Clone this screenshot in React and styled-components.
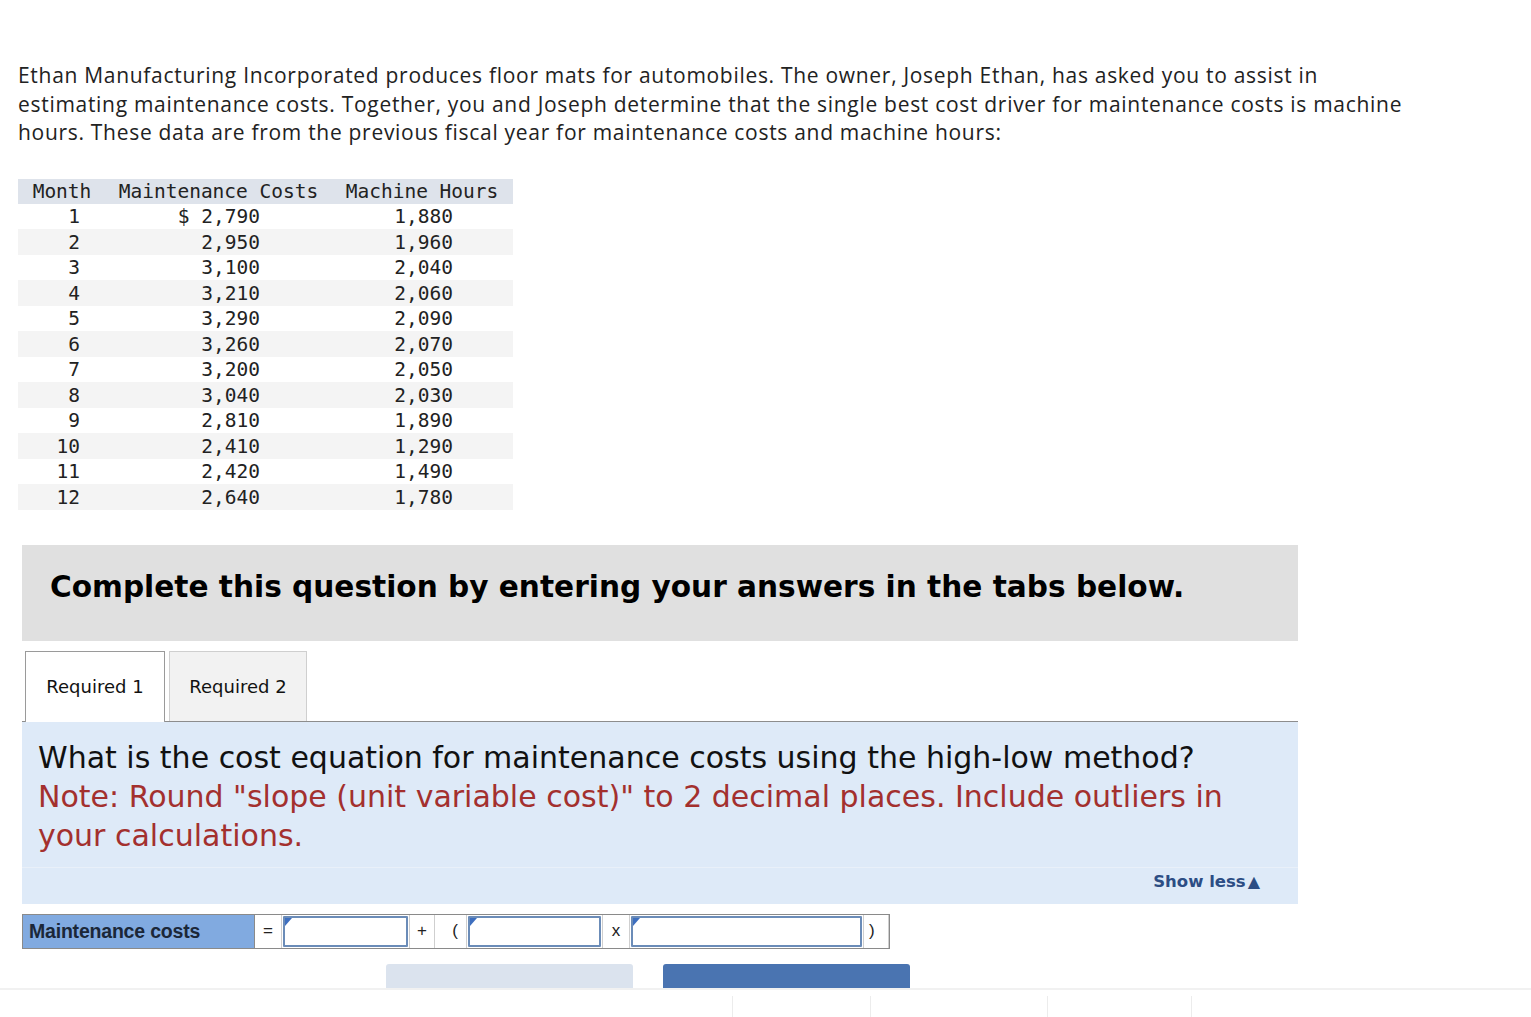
import styled, { createGlobalStyle } from 'styled-components'

const GlobalStyle = createGlobalStyle`
  html, body { margin: 0; padding: 0; background: #fff; }
  body { font-family: "Liberation Sans", Arial, sans-serif; color: #1a1a1a; }
`

const Page = styled.div`
  padding: 61px 0 0 18px;
  min-height: 1017px;
  box-sizing: border-box;
`

const Intro = styled.p`
  margin: 0;
  white-space: nowrap;
  font-family: "Open Sans", "Lato", sans-serif;
  font-size: 21px;
  letter-spacing: 0.7px;
  line-height: 28.6px;
  color: #222;
`

const DataTable = styled.table`
  margin-top: 32px;
  border-collapse: collapse;
  width: 495px;
  font-family: "DejaVu Sans Mono", monospace;
  font-size: 19.5px;
  color: #222;
`

const HeadCell = styled.th`
  background: #dee3eb;
  font-weight: normal;
  height: 25px;
  padding: 0;
  text-align: center;
  white-space: nowrap;
`

const Row = styled.tr`
  background: ${p => (p.$alt ? '#f4f4f4' : '#fff')};
`

const Cell = styled.td`
  height: 25.5px;
  padding: 0 ${p => p.$pad || 0}px 0 0;
  text-align: right;
  white-space: nowrap;
`

const Question = styled.section`
  margin: 35px 0 0 4px;
  width: 1276px;
`

const Banner = styled.div`
  background: #e0e0e0;
  height: 96px;
  box-sizing: border-box;
  padding: 0 0 12px 28px;
  display: flex;
  align-items: center;
  font-family: "DejaVu Sans", Verdana, sans-serif;
  font-weight: bold;
  font-size: 29.6px;
  color: #000;
`

const TabBar = styled.div`
  margin-top: 10px;
  display: flex;
  gap: 4px;
  padding-left: 3px;
  border-bottom: 1px solid #8d8d8d;
`

const Tab = styled.div`
  width: ${p => p.$w}px;
  box-sizing: border-box;
  display: flex;
  align-items: center;
  justify-content: center;
  font-family: "DejaVu Sans", Verdana, sans-serif;
  font-size: 18px;
  color: #111;
  background: ${p => (p.$active ? '#fff' : '#f2f2f2')};
  border: 1px solid ${p => (p.$active ? '#9a9a9a' : '#cfcfcf')};
  border-bottom: none;
  margin-bottom: ${p => (p.$active ? '-1px' : '0')};
  height: ${p => (p.$active ? 71 : 70)}px;
`

const Panel = styled.div`
  background: #deeaf8;
`

const Prompt = styled.div`
  padding: 16px 16px 12px 16px;
  font-family: "DejaVu Sans", Verdana, sans-serif;
  font-size: 30px;
  line-height: 39px;
  color: #111;
  border-bottom: 1px solid #e9f0f9;
`

const Note = styled.span`
  display: block;
  color: #a3302e;
`

const ShowLessRow = styled.div`
  height: 36px;
  box-sizing: border-box;
  padding: 0 38px 9px 0;
  display: flex;
  align-items: center;
  justify-content: flex-end;
  font-family: "DejaVu Sans", Verdana, sans-serif;
  font-weight: bold;
  font-size: 16.5px;
  color: #2c4d84;
`

const Triangle = styled.span`
  font-size: 16px;
  margin-left: 2px;
`

const Equation = styled.div`
  margin-top: 10px;
  display: flex;
  height: 33px;
  width: fit-content;
  border: 1px solid #8a8a8a;
`

const Label = styled.div`
  width: 232px;
  box-sizing: border-box;
  background: #81aae0;
  display: flex;
  align-items: center;
  padding-left: 6px;
  font-weight: bold;
  font-size: 19.5px;
  letter-spacing: -0.2px;
  color: #1b2738;
  border-right: 1px solid #8a8a8a;
`

const Sign = styled.div`
  width: ${p => p.$w}px;
  display: flex;
  align-items: center;
  justify-content: ${p => p.$justify || 'center'};
  font-size: 17px;
  color: #222;
  background: #fff;
  border-right: 1px solid #cfcfcf;
  padding: 0 ${p => p.$pr || 0}px 0 ${p => p.$pl || 0}px;
  box-sizing: border-box;
`

const InputWrap = styled.div`
  position: relative;
  width: ${p => p.$w}px;
  box-sizing: border-box;
  padding: 1px;
  background: #fff;
  border-right: 1px solid #cfcfcf;
`

const Field = styled.input`
  width: 100%;
  height: 100%;
  box-sizing: border-box;
  border: 2px solid #6b8cb8;
  border-radius: 1px;
  outline: none;
  background: #fff;
  font-size: 16px;
`

const Flag = styled.span`
  position: absolute;
  left: 3px;
  top: 3px;
  width: 0;
  height: 0;
  border-bottom: 8px solid transparent;
  border-left: 7px solid #3e6fbf;
`

const Nav = styled.div`
  margin: 15px 0 0 364px;
  display: flex;
  gap: 30px;
`

const NavButton = styled.div`
  width: 247px;
  height: 44px;
  border-radius: 3px 3px 0 0;
  background: ${p => (p.$primary ? '#4a74b1' : '#dbe3ee')};
`

const Footer = styled.footer`
  position: fixed;
  left: 0;
  right: 0;
  bottom: 0;
  height: 27px;
  background: #fff;
  border-top: 2px solid #f1f1f1;
  display: flex;
  padding-left: 732px;
`

const FooterCell = styled.div`
  width: ${p => p.$w}px;
  border-left: 1px solid #ececec;
  margin-top: 6px;
`

const rows = [
  [1, '$ 2,790', '1,880'],
  [2, '2,950', '1,960'],
  [3, '3,100', '2,040'],
  [4, '3,210', '2,060'],
  [5, '3,290', '2,090'],
  [6, '3,260', '2,070'],
  [7, '3,200', '2,050'],
  [8, '3,040', '2,030'],
  [9, '2,810', '1,890'],
  [10, '2,410', '1,290'],
  [11, '2,420', '1,490'],
  [12, '2,640', '1,780'],
]

function Input({ w }) {
  return (
    <InputWrap $w={w}>
      <Flag />
      <Field />
    </InputWrap>
  )
}

export default function App() {
  return (
    <>
      <GlobalStyle />
      <Page>
        <Intro>
          Ethan Manufacturing Incorporated produces floor mats for automobiles. The owner, Joseph Ethan, has asked you to assist in<br />
          estimating maintenance costs. Together, you and Joseph determine that the single best cost driver for maintenance costs is machine<br />
          hours. These data are from the previous fiscal year for maintenance costs and machine hours:
        </Intro>

        <DataTable>
          <colgroup>
            <col style={{ width: 88 }} />
            <col style={{ width: 225 }} />
            <col style={{ width: 182 }} />
          </colgroup>
          <thead>
            <tr>
              <HeadCell>Month</HeadCell>
              <HeadCell>Maintenance Costs</HeadCell>
              <HeadCell>Machine Hours</HeadCell>
            </tr>
          </thead>
          <tbody>
            {rows.map(([m, cost, hrs]) => (
              <Row key={m} $alt={m % 2 === 0}>
                <Cell $pad={26}>{m}</Cell>
                <Cell $pad={71}>{cost}</Cell>
                <Cell $pad={60}>{hrs}</Cell>
              </Row>
            ))}
          </tbody>
        </DataTable>

        <Question>
          <Banner>Complete this question by entering your answers in the tabs below.</Banner>

          <TabBar>
            <Tab $active $w={140}>Required 1</Tab>
            <Tab $w={138}>Required 2</Tab>
          </TabBar>

          <Panel>
            <Prompt>
              What is the cost equation for maintenance costs using the high-low method?
              <Note>Note: Round "slope (unit variable cost)" to 2 decimal places. Include outliers in your calculations.</Note>
            </Prompt>
            <ShowLessRow>
              Show less<Triangle>▲</Triangle>
            </ShowLessRow>
          </Panel>

          <Equation>
            <Label>Maintenance costs</Label>
            <Sign $w={27}>=</Sign>
            <Input w={128} />
            <Sign $w={25}>+</Sign>
            <Sign $w={32} $justify="flex-end" $pr={8}>(</Sign>
            <Input w={136} />
            <Sign $w={27}>x</Sign>
            <Input w={234} />
            <Sign $w={25} $justify="flex-start" $pl={5}>)</Sign>
          </Equation>

          <Nav>
            <NavButton />
            <NavButton $primary />
          </Nav>
        </Question>
      </Page>
      <Footer>
        <FooterCell $w={138} />
        <FooterCell $w={176} />
        <FooterCell $w={144} />
        <FooterCell $w={340} />
      </Footer>
    </>
  )
}
